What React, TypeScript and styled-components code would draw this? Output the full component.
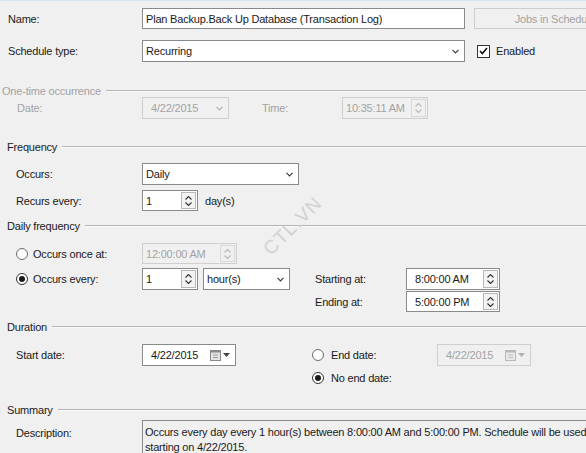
import React from 'react';
import styled, { createGlobalStyle } from 'styled-components';

const Global = createGlobalStyle`
  html, body { margin: 0; padding: 0; background: #f0f0f0; }
  body {
    width: 586px; height: 453px; overflow: hidden;
    font-family: "Liberation Sans", Arial, sans-serif;
    font-size: 11px; letter-spacing: -0.2px; color: #1a1a1a;
  }
`;

const Page = styled.div`
  position: relative;
  width: 586px;
  height: 453px;
  overflow: hidden;
  box-sizing: border-box;
  border-top: 1px solid #d6e3ec;
`;

const Row = styled.div<{ $mt: number; $h: number; $ml?: number; $top?: boolean }>`
  display: flex;
  align-items: ${p => (p.$top ? 'flex-start' : 'center')};
  height: ${p => p.$h}px;
  margin-top: ${p => p.$mt}px;
  margin-left: ${p => p.$ml ?? 0}px;
  white-space: nowrap;
`;

const Label = styled.div<{ $w?: number; $pl?: number; $ml?: number; $dis?: boolean; $pt?: number }>`
  flex-shrink: 0;
  box-sizing: border-box;
  width: ${p => (p.$w ? `${p.$w}px` : 'auto')};
  padding-left: ${p => p.$pl ?? 0}px;
  padding-top: ${p => p.$pt ?? 0}px;
  margin-left: ${p => p.$ml ?? 0}px;
  color: ${p => (p.$dis ? '#a3a3a3' : '#1a1a1a')};
  display: flex;
  align-items: center;
`;

const Field = styled.div<{ $w: number; $dis?: boolean; $pl?: number; $ml?: number }>`
  flex-shrink: 0;
  box-sizing: border-box;
  display: flex;
  align-items: center;
  width: ${p => p.$w}px;
  height: 100%;
  margin-left: ${p => p.$ml ?? 0}px;
  padding-left: ${p => p.$pl ?? 3}px;
  border: 1px solid ${p => (p.$dis ? '#cfcfcf' : '#8a8a8a')};
  background: ${p => (p.$dis ? '#f0f0f0' : '#ffffff')};
  color: ${p => (p.$dis ? '#a3a3a3' : '#1a1a1a')};
  overflow: hidden;
`;

const FieldText = styled.span`
  flex: 1;
`;

const Chevron = styled.span<{ $dis?: boolean }>`
  display: flex;
  width: 7px;
  margin-right: 5px;
  color: ${p => (p.$dis ? '#b0b0b0' : '#3a3a3a')};
`;

const SpinBox = styled.div<{ $dis?: boolean }>`
  box-sizing: border-box;
  width: 15px;
  height: calc(100% - 2px);
  margin-right: 1px;
  border: 1px solid ${p => (p.$dis ? '#d8d8d8' : '#b8b8b8')};
  background: ${p => (p.$dis ? '#f0f0f0' : '#f3f3f3')};
  display: flex;
  flex-direction: column;
  align-items: center;
  justify-content: center;
  gap: 2px;
  color: ${p => (p.$dis ? '#b8b8b8' : '#333')};
`;

const Button = styled.div`
  flex-shrink: 0;
  box-sizing: border-box;
  margin-left: 9px;
  width: 162px;
  height: 100%;
  border: 1px solid #cdcdcd;
  background: #f0f0f0;
  color: #a3a3a3;
  display: flex;
  align-items: center;
  justify-content: center;
`;

const CheckBox = styled.div`
  box-sizing: border-box;
  width: 13px;
  height: 13px;
  margin-left: 12px;
  margin-right: 6px;
  border: 1px solid #333;
  background: #fff;
  display: flex;
  align-items: center;
  justify-content: center;
`;

const RadioCircle = styled.div<{ $on?: boolean; $gap: number }>`
  box-sizing: border-box;
  width: 12px;
  height: 12px;
  border-radius: 50%;
  border: 1px solid ${p => (p.$on ? '#333' : '#6b6b6b')};
  background: #fff;
  margin-right: ${p => p.$gap}px;
  display: flex;
  align-items: center;
  justify-content: center;
  &::after {
    content: '';
    display: ${p => (p.$on ? 'block' : 'none')};
    width: 6px;
    height: 6px;
    border-radius: 50%;
    background: #1a1a1a;
  }
`;

const Header = styled.div<{ $mt: number; $pl: number; $dis?: boolean }>`
  display: flex;
  align-items: center;
  height: 12px;
  margin-top: ${p => p.$mt}px;
  padding-left: ${p => p.$pl}px;
  color: ${p => (p.$dis ? '#a3a3a3' : '#1a1a1a')};
  white-space: nowrap;
`;

const HeaderLine = styled.div`
  flex: 1;
  margin-left: 5px;
  border-top: 1px solid #b4b4b4;
  border-bottom: 1px solid #fbfbfb;
`;

const Summary = styled.div`
  flex-shrink: 0;
  box-sizing: border-box;
  width: 460px;
  height: 40px;
  border: 1px solid #8a8a8a;
  background: #f0f0f0;
  padding: 4px 0 0 2px;
  line-height: 15px;
  white-space: normal;
`;

const CalIcon = styled.span`
  display: flex;
  align-items: center;
  gap: 2px;
  margin-left: auto;
  margin-right: 5px;
`;

const Watermark = styled.div`
  position: absolute;
  left: 256px;
  top: 214px;
  transform: rotate(-45deg);
  font-family: "Liberation Sans", Arial, sans-serif;
  font-size: 19px;
  letter-spacing: 1px;
  color: #d2d2d2;
  pointer-events: none;
`;

const Down = ({ dis }: { dis?: boolean }) => (
  <Chevron $dis={dis}>
    <svg width="7" height="5" viewBox="0 0 7 5">
      <polyline points="0.5,0.8 3.5,3.8 6.5,0.8" fill="none" stroke="currentColor" strokeWidth="1.2" />
    </svg>
  </Chevron>
);

const Spin = ({ dis }: { dis?: boolean }) => (
  <SpinBox $dis={dis}>
    <svg width="7" height="4" viewBox="0 0 7 4">
      <polyline points="0.5,3.5 3.5,0.5 6.5,3.5" fill="none" stroke="currentColor" strokeWidth="1.1" />
    </svg>
    <svg width="7" height="4" viewBox="0 0 7 4">
      <polyline points="0.5,0.5 3.5,3.5 6.5,0.5" fill="none" stroke="currentColor" strokeWidth="1.1" />
    </svg>
  </SpinBox>
);

const Calendar = ({ dis }: { dis?: boolean }) => {
  const c = dis ? '#b8b8b8' : '#8a8a8a';
  return (
    <CalIcon>
      <svg width="11" height="11" viewBox="0 0 11 11">
        <rect x="0.5" y="0.5" width="10" height="10" fill={dis ? '#e8e8e8' : '#e4e4e4'} stroke={c} />
        <rect x="0.5" y="0.5" width="10" height="2" fill={c} />
        <line x1="3" y1="5" x2="8" y2="5" stroke={c} strokeWidth="0.8" />
        <line x1="3" y1="7.5" x2="8" y2="7.5" stroke={c} strokeWidth="0.8" />
      </svg>
      <svg width="7" height="4" viewBox="0 0 7 4">
        <polygon points="0,0 7,0 3.5,4" fill={dis ? '#b0b0b0' : '#444'} />
      </svg>
    </CalIcon>
  );
};

const Radio = ({ on, gap, label, w, pl }: { on?: boolean; gap: number; label: string; w?: number; pl?: number }) => (
  <Label $w={w} $pl={pl}>
    <RadioCircle $on={on} $gap={gap} />
    {label}
  </Label>
);

export default function App() {
  return (
    <>
      <Global />
      <Page>
        <Row $mt={7} $h={21}>
          <Label $w={142} $pl={8}>Name:</Label>
          <Field $w={323}>
            <FieldText>Plan Backup.Back Up Database (Transaction Log)</FieldText>
          </Field>
          <Button>Jobs in Schedule</Button>
        </Row>

        <Row $mt={11} $h={22}>
          <Label $w={142} $pl={8}>Schedule type:</Label>
          <Field $w={323}>
            <FieldText>Recurring</FieldText>
            <Down />
          </Field>
          <CheckBox>
            <svg width="9" height="8" viewBox="0 0 9 8">
              <polyline points="1,4 3.4,6.5 8,1" fill="none" stroke="#111" strokeWidth="1.6" />
            </svg>
          </CheckBox>
          <Label>Enabled</Label>
        </Row>

        <Header $mt={23} $pl={2} $dis>
          One-time occurrence
          <HeaderLine />
        </Header>
        <Row $mt={0} $h={22}>
          <Label $w={142} $pl={17} $dis>Date:</Label>
          <Field $w={87} $pl={8} $dis>
            <FieldText>4/22/2015</FieldText>
            <Down dis />
          </Field>
          <Label $w={80} $ml={33} $dis>Time:</Label>
          <Field $w={86} $dis>
            <FieldText>10:35:11 AM</FieldText>
            <Spin dis />
          </Field>
        </Row>

        <Header $mt={22} $pl={7}>
          Frequency
          <HeaderLine />
        </Header>
        <Row $mt={10} $h={22}>
          <Label $w={142} $pl={16}>Occurs:</Label>
          <Field $w={157}>
            <FieldText>Daily</FieldText>
            <Down />
          </Field>
        </Row>
        <Row $mt={5} $h={21}>
          <Label $w={142} $pl={16}>Recurs every:</Label>
          <Field $w={56}>
            <FieldText>1</FieldText>
            <Spin />
          </Field>
          <Label $ml={7}>day(s)</Label>
        </Row>

        <Header $mt={9} $pl={7}>
          Daily frequency
          <HeaderLine />
        </Header>
        <Row $mt={11} $h={21}>
          <Radio w={142} pl={16} gap={5} label="Occurs once at:" />
          <Field $w={95} $dis>
            <FieldText>12:00:00 AM</FieldText>
            <Spin dis />
          </Field>
        </Row>
        <Row $mt={4} $h={22}>
          <Radio w={142} pl={16} gap={5} on label="Occurs every:" />
          <Field $w={56}>
            <FieldText>1</FieldText>
            <Spin />
          </Field>
          <Field $w={87} $ml={5}>
            <FieldText>hour(s)</FieldText>
            <Down />
          </Field>
          <Label $w={91} $ml={25}>Starting at:</Label>
          <Field $w={94} $pl={8}>
            <FieldText>8:00:00 AM</FieldText>
            <Spin />
          </Field>
        </Row>
        <Row $mt={1} $h={21} $ml={315}>
          <Label $w={91}>Ending at:</Label>
          <Field $w={94} $pl={8}>
            <FieldText>5:00:00 PM</FieldText>
            <Spin />
          </Field>
        </Row>

        <Header $mt={9} $pl={7}>
          Duration
          <HeaderLine />
        </Header>
        <Row $mt={11} $h={22}>
          <Label $w={142} $pl={16}>Start date:</Label>
          <Field $w={94} $pl={8}>
            <FieldText>4/22/2015</FieldText>
            <Calendar />
          </Field>
          <Label $ml={76} $w={125}>
            <RadioCircle $gap={7} />
            End date:
          </Label>
          <Field $w={94} $pl={8} $dis>
            <FieldText>4/22/2015</FieldText>
            <Calendar dis />
          </Field>
        </Row>
        <Row $mt={5} $h={14} $ml={312}>
          <Radio on gap={7} label="No end date:" />
        </Row>

        <Header $mt={19} $pl={7}>
          Summary
          <HeaderLine />
        </Header>
        <Row $mt={4} $h={40} $top>
          <Label $w={142} $pl={16} $pt={7}>Description:</Label>
          <Summary>
            Occurs every day every 1 hour(s) between 8:00:00 AM and 5:00:00 PM. Schedule will be used
            starting on 4/22/2015.
          </Summary>
        </Row>

        <Watermark>CTL.VN</Watermark>
      </Page>
    </>
  );
}
